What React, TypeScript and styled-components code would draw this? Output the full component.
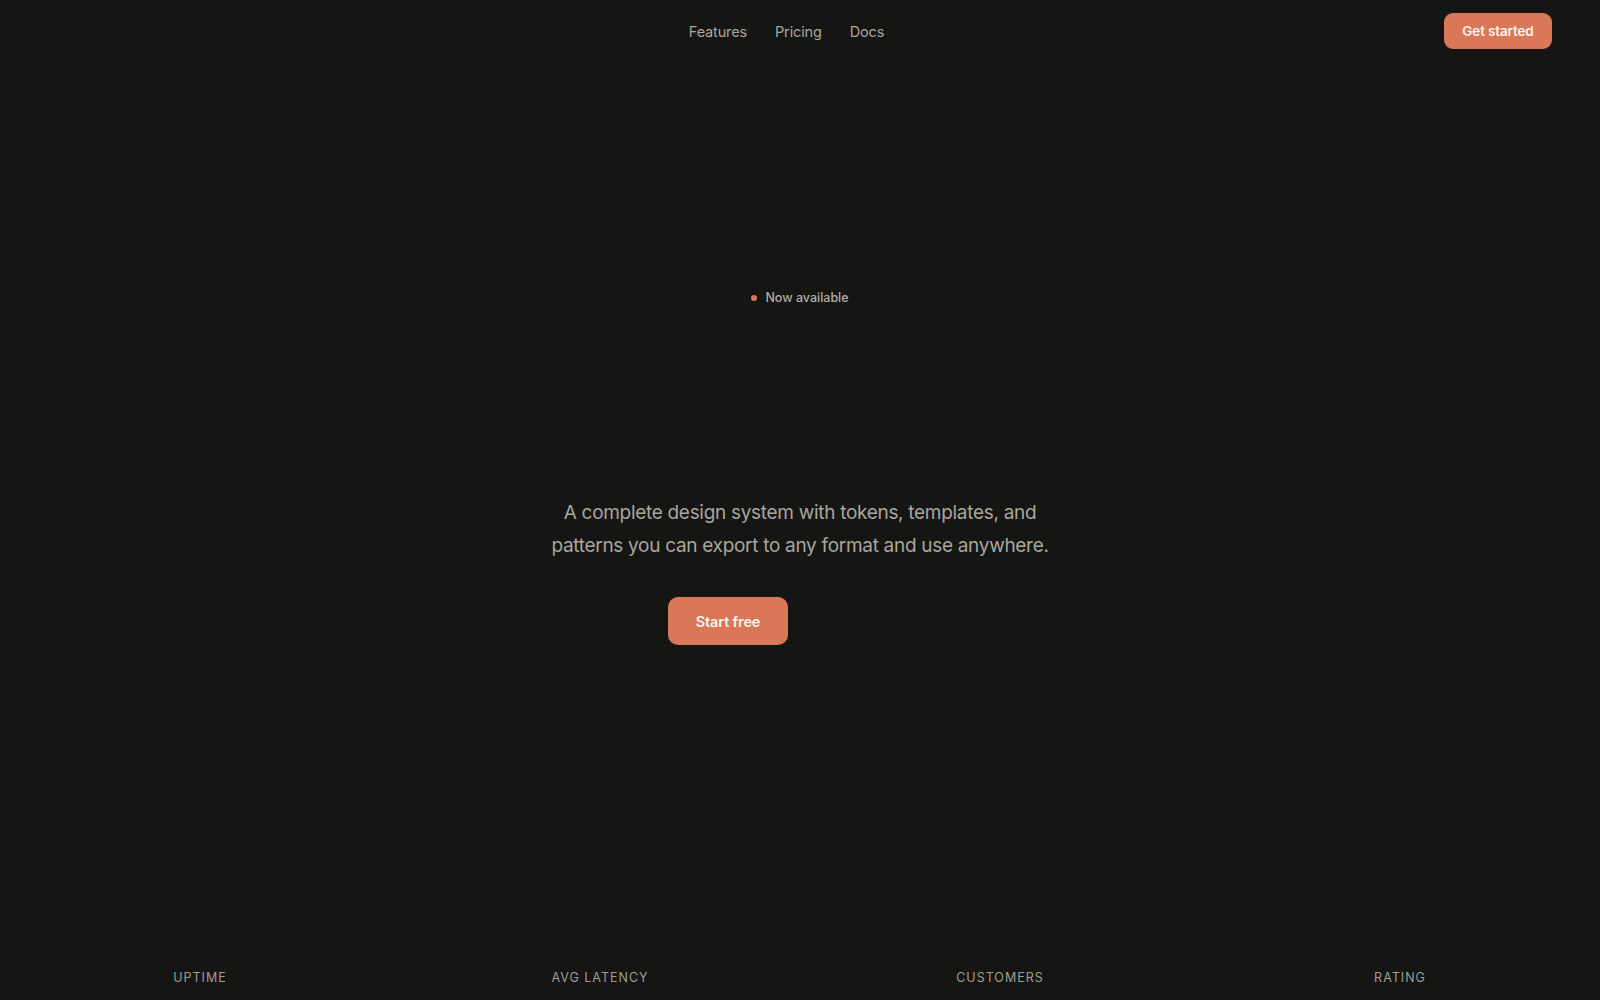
import React from "react";
import styled, { createGlobalStyle } from "styled-components";

const Global = createGlobalStyle`
  html, body { margin: 0; padding: 0; background: #151513; }
  body { font-family: Inter, "Noto Sans", sans-serif; color: #a9a69f; -webkit-font-smoothing: antialiased; }
  * { box-sizing: border-box; }
`;

const Page = styled.div`
  height: 1000px;
  overflow: hidden;
  background: #151513;
  display: flex;
  flex-direction: column;
`;

const Nav = styled.header`
  height: 62px;
  padding: 0 48px;
  display: flex;
  align-items: center;
  justify-content: space-between;
`;

const Brand = styled.div`
  width: 81px;
  height: 24px;
`;

const Links = styled.nav`
  display: flex;
  gap: 28px;
  margin-top: 2px;
`;

const NavLink = styled.a`
  font-size: 14.5px;
  letter-spacing: -0.15px;
  color: #a9a69f;
  text-decoration: none;
  line-height: 20px;
`;

const Button = styled.button<{ $size?: "sm" | "lg" }>`
  border: none;
  background: #d97757;
  color: #fbf3ee;
  font-family: Inter, "Noto Sans", sans-serif;
  font-weight: 600;
  font-size: ${(p) => (p.$size === "lg" ? "14.5px" : "13.5px")};
  letter-spacing: -0.15px;
  height: ${(p) => (p.$size === "lg" ? "48px" : "36px")};
  width: ${(p) => (p.$size === "lg" ? "120px" : "108px")};
  border-radius: ${(p) => (p.$size === "lg" ? "10px" : "9px")};
  cursor: pointer;
`;

const Hero = styled.main`
  display: flex;
  flex-direction: column;
  align-items: center;
  padding-top: 226px;
`;

const Badge = styled.div`
  display: flex;
  align-items: center;
  gap: 8px;
  font-size: 12.5px;
  font-weight: 500;
  color: #b0ada6;
  height: 18px;
`;

const Dot = styled.span`
  width: 6px;
  height: 6px;
  border-radius: 50%;
  background: #d97757;
  margin-top: 2px;
`;

const Lead = styled.p`
  margin: 190px 0 0;
  font-size: 19px;
  letter-spacing: -0.3px;
  line-height: 33px;
  text-align: center;
  color: #a9a69f;
  max-width: 520px;
`;

const Actions = styled.div`
  margin-top: 35px;
  width: 264px;
  display: flex;
  justify-content: flex-start;
  gap: 12px;
`;

const Stats = styled.section`
  margin-top: auto;
  display: grid;
  grid-template-columns: repeat(4, 1fr);
  padding-bottom: 14px;
`;

const StatLabel = styled.div`
  text-align: center;
  font-size: 12.5px;
  letter-spacing: 1px;
  text-transform: uppercase;
  color: #a09d96;
  line-height: 16px;
`;

const stats = ["Uptime", "Avg latency", "Customers", "Rating"];

export default function App() {
  return (
    <>
      <Global />
      <Page>
        <Nav>
          <Brand />
          <Links>
            <NavLink href="#">Features</NavLink>
            <NavLink href="#">Pricing</NavLink>
            <NavLink href="#">Docs</NavLink>
          </Links>
          <Button>Get started</Button>
        </Nav>
        <Hero>
          <Badge>
            <Dot />
            Now available
          </Badge>
          <Lead>
            A complete design system with tokens, templates, and patterns you can export to any format and use anywhere.
          </Lead>
          <Actions>
            <Button $size="lg">Start free</Button>
          </Actions>
        </Hero>
        <Stats>
          {stats.map((s) => (
            <StatLabel key={s}>{s}</StatLabel>
          ))}
        </Stats>
      </Page>
    </>
  );
}
